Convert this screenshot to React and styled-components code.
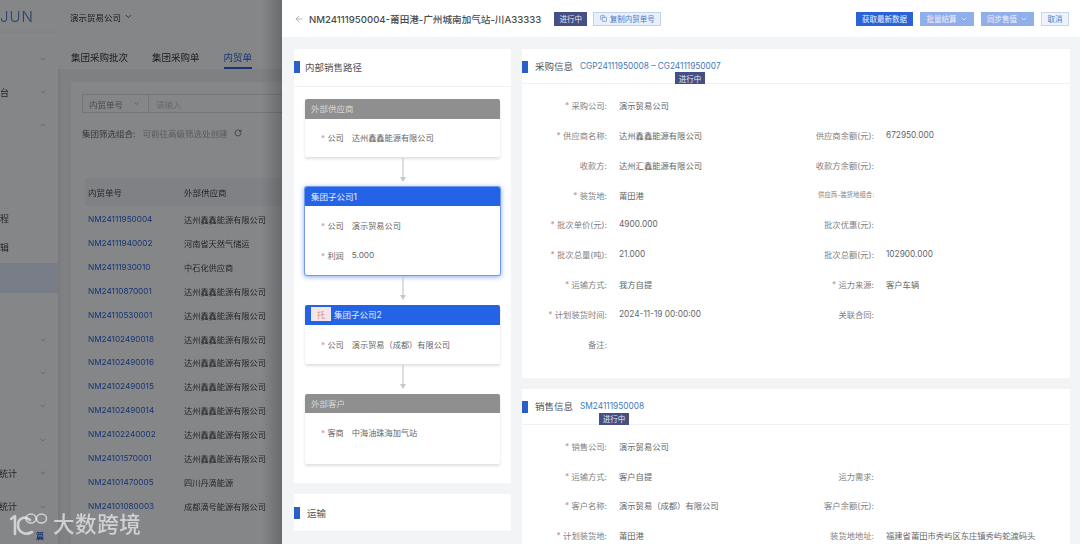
import React from "react";
import styled, { createGlobalStyle } from "styled-components";
import { ArrowLeft, ChevronDown, ChevronUp, Copy, RotateCw } from "lucide-react";

const GlobalStyle = createGlobalStyle`
  html, body { margin: 0; padding: 0; }
  body {
    width: 1080px;
    height: 544px;
    overflow: hidden;
    font-family: Inter, "Noto Sans CJK SC", sans-serif;
    color: #555;
  }
  * { box-sizing: border-box; }
`;

const Page = styled.div`
  position: relative;
  display: flex;
  width: 1080px;
  height: 544px;
  overflow: hidden;
  filter: blur(0.25px);
`;

/* page behind the drawer */
const Behind = styled.div`
  position: relative;
  flex: 0 0 282px;
  height: 544px;
  overflow: hidden;
  background: #f2f3f6;
  filter: blur(0.5px);
`;

const Dim = styled.div`
  position: absolute;
  inset: 0;
  background: linear-gradient(90deg, rgba(0, 0, 0, 0) 262px, rgba(0, 0, 0, 0.2) 282px), rgba(6, 8, 12, 0.49);
`;

const TopBar = styled.div`
  display: flex;
  align-items: center;
  height: 33px;
  background: #fff;
`;

const Brand = styled.div`
  width: 70px;
  font-size: 15px;
  font-weight: 300;
  letter-spacing: 1px;
  color: #4a79c8;
  line-height: 1;
`;

const Company = styled.div`
  display: flex;
  align-items: center;
  gap: 3px;
  font-size: 8.5px;
  color: #333;
`;

const Under = styled.div`
  display: flex;
  height: 511px;
`;

const Side = styled.aside`
  flex: 0 0 58px;
  padding-top: 9px;
  background: #fff;
  box-shadow: 1px 0 3px rgba(0, 0, 0, 0.08);
`;

const SideItem = styled.div`
  display: flex;
  align-items: center;
  justify-content: space-between;
  height: ${(p) => p.$h}px;
  padding-right: 11px;
  font-size: 9px;
  color: #444;
  background: ${(p) => (p.$active ? "#e6eeff" : "transparent")};
`;

const SideText = styled.span`
  display: flex;
  justify-content: flex-end;
  width: ${(p) => p.$w || 9}px;
  overflow: hidden;
  white-space: nowrap;
`;

const SideMark = styled.span`
  margin-left: 36px;
  font-size: 8px;
  font-weight: 700;
  color: #2a62d8;
`;

const Main = styled.div`
  flex: 1;
  min-width: 0;
`;

const Tabs = styled.div`
  display: flex;
  gap: 24px;
  height: 36px;
  padding: 17px 0 0 13px;
  background: #fff;
`;

const Tab = styled.div`
  height: 19px;
  font-size: 9.5px;
  line-height: 16px;
  white-space: nowrap;
  color: ${(p) => (p.$active ? "#2a5fd9" : "#333")};
  border-bottom: ${(p) => (p.$active ? "2px solid #2a5fd9" : "0")};
`;

const ListPanel = styled.div`
  margin: 13px 0 0 13px;
  height: 480px;
  padding: 12px 0 0 11px;
  background: #fff;
`;

const SearchBox = styled.div`
  display: flex;
  align-items: center;
  width: 220px;
  height: 19px;
  border: 1px solid #dcdfe6;
  font-size: 8.5px;
  color: #888;
`;

const SearchSelect = styled.div`
  display: flex;
  align-items: center;
  justify-content: space-between;
  width: 66px;
  height: 100%;
  padding: 0 8px 0 6px;
  border-right: 1px solid #dcdfe6;
`;

const Placeholder = styled.span`
  margin-left: 7px;
  color: #c4c7cc;
`;

const Combo = styled.div`
  display: flex;
  align-items: center;
  gap: 7px;
  margin-top: 13.5px;
  font-size: 8.5px;
  white-space: nowrap;
  color: #666;
`;

const ComboHint = styled.span`
  color: #aaa;
`;

const ListHead = styled.div`
  display: grid;
  grid-template-columns: 96px 1fr;
  align-items: center;
  width: 260px;
  height: 28px;
  margin: 39px 0 1.5px 3px;
  padding-left: 3px;
  font-size: 8.5px;
  color: #444;
  background: #f5f6f8;
`;

const ListRow = styled.div`
  display: grid;
  grid-template-columns: 96px 1fr;
  align-items: center;
  height: 23.93px;
  padding-left: 6px;
  font-size: 8.2px;
  white-space: nowrap;
`;

const ListId = styled.span`
  color: #2a5fd9;
`;

const ListName = styled.span`
  color: #444;
`;

/* drawer */
const Drawer = styled.div`
  flex: 1;
  min-width: 0;
  background: #f2f4f5;
`;

const DrawerHead = styled.header`
  display: flex;
  align-items: center;
  height: 37px;
  padding: 0 11px 0 12px;
  background: #fff;
`;

const Title = styled.h1`
  margin: 0 13px 0 5px;
  font-size: 9.6px;
  font-weight: 500;
  white-space: nowrap;
  color: #4a4a4a;
`;

const StatusTag = styled.span`
  display: inline-flex;
  align-items: center;
  justify-content: center;
  width: ${(p) => p.$w || 33}px;
  height: ${(p) => p.$h || 14}px;
  font-size: 7.5px;
  color: #e3e6f2;
  background: #454f83;
`;

const CopyButton = styled.button`
  display: inline-flex;
  align-items: center;
  justify-content: center;
  gap: 3px;
  width: 68px;
  height: 14px;
  margin-left: 6px;
  padding: 0;
  font: inherit;
  font-size: 7.5px;
  color: #4a78c4;
  background: #e9f0fb;
  border: 1px solid #bfd2ee;
`;

const HeadActions = styled.div`
  display: flex;
  gap: 7px;
  margin-left: auto;
`;

const ActionButton = styled.button`
  display: inline-flex;
  align-items: center;
  justify-content: center;
  gap: 3px;
  width: ${(p) => p.$w}px;
  height: 14px;
  padding: 0;
  font: inherit;
  font-size: 7.5px;
  color: ${(p) => (p.$plain ? "#4a78c4" : "#eef3ff")};
  background: ${(p) => (p.$plain ? "#eef3fb" : p.$soft ? "#90aeea" : "#2a62d8")};
  border: ${(p) => (p.$plain ? "1px solid #c7d6ee" : "0")};
`;

const DrawerBody = styled.div`
  display: grid;
  grid-template-columns: 217px 548px;
  gap: 11px;
  padding: 12px 0 0 12px;
`;

const Column = styled.div`
  display: flex;
  flex-direction: column;
  gap: 11px;
`;

const Card = styled.section`
  background: #fff;
`;

const CardHead = styled.div`
  position: relative;
  display: flex;
  align-items: center;
  height: ${(p) => p.$h || 35}px;
  padding-left: ${(p) => p.$pad || 13}px;
  padding-bottom: ${(p) => p.$lift || 0}px;
  border-bottom: 1px solid #f0f1f3;
  font-size: 9.5px;
  color: #555;
  &::before {
    content: "";
    position: absolute;
    left: 0;
    top: ${(p) => p.$markTop || 12}px;
    width: 6px;
    height: 12px;
    background: #2a5fc9;
  }
`;

const CardCode = styled.span`
  margin-left: 7px;
  font-size: 8.3px;
  color: #4678b8;
`;

const FloatingTag = styled.div`
  position: absolute;
  left: ${(p) => p.$left}px;
  top: ${(p) => p.$top || 23}px;
`;

const FlowWrap = styled.div`
  padding: 12px 11px 19px;
`;

const Node = styled.div`
  border-radius: 2px;
  background: #fff;
  box-shadow: ${(p) =>
    p.$focus
      ? "0 0 0 1px #6f9bec, 0 1px 5px 1px rgba(42, 98, 216, 0.55)"
      : "0 2px 3px rgba(0, 0, 0, 0.13)"};
`;

const NodeHead = styled.div`
  display: flex;
  align-items: center;
  gap: 3px;
  height: 19.5px;
  padding-left: 6px;
  padding-bottom: 1px;
  border-radius: 2px 2px 0 0;
  font-size: 8.5px;
  color: ${(p) => (p.$blue ? "#e8eeff" : "#d8d8d8")};
  background: ${(p) => (p.$blue ? "#2462e6" : "#8f8f8f")};
`;

const Badge = styled.span`
  display: inline-flex;
  align-items: center;
  justify-content: center;
  width: 20px;
  height: 14px;
  font-size: 8px;
  color: #d98a8a;
  background: #f3e6e6;
`;

const NodeBody = styled.div`
  padding: ${(p) => p.$top ?? 4}px 0 ${(p) => p.$bottom || 5}px;
`;

const NodeRow = styled.div`
  display: flex;
  align-items: center;
  height: 30px;
  padding-left: 16px;
  font-size: 8.2px;
  white-space: nowrap;
  color: #666;
`;

const NodeLabel = styled.span`
  margin-right: 8px;
  &::before {
    content: "* ";
    color: #b99;
  }
`;

const Connector = styled.div`
  display: flex;
  justify-content: center;
  height: ${(p) => p.$h || 30}px;
  padding-top: 1px;
`;

const FormGrid = styled.div`
  display: grid;
  grid-template-columns: 268px 1fr;
  padding: 6px 0 19px;
`;

const Field = styled.div`
  display: flex;
  align-items: center;
  height: 29.87px;
  font-size: 8.3px;
  white-space: nowrap;
`;

const FieldLabel = styled.span`
  flex: 0 0 ${(p) => p.$w || 85}px;
  font-size: ${(p) => (p.$small ? 6.4 : 8.3)}px;
  text-align: right;
  color: #808080;
  &::before {
    content: ${(p) => (p.$req ? '"* "' : '""')};
    color: #b99;
  }
`;

const FieldValue = styled.span`
  margin-left: 12px;
  color: #666;
`;

const Watermark = styled.div`
  position: absolute;
  left: 10px;
  top: 511px;
  display: flex;
  align-items: center;
  gap: 5px;
  font-size: 21.5px;
  font-weight: 500;
  line-height: 26px;
  letter-spacing: 0.6px;
  color: rgba(255, 255, 255, 0.62);
`;

const sideItems = [
  { h: 33.4, chev: "down" },
  { h: 33.4, chev: "down", text: "台" },
  { h: 33.4, chev: "up", text: "" },
  { h: 62.8 },
  { h: 28, text: "程" },
  { h: 30, text: "辑" },
  { h: 30, active: true },
  { h: 30 },
  { h: 33.4, chev: "down" },
  { h: 33.4, chev: "down" },
  { h: 33.4, chev: "down" },
  { h: 33.4, chev: "down" },
  { h: 33.4, chev: "down", text: "统计", w: 17 },
  { h: 33.4, chev: "down", text: "统计", w: 17 },
];

const supplier = "达州鑫鑫能源有限公司";
const orders = [
  ["NM24111950004", supplier],
  ["NM24111940002", "河南省天然气储运"],
  ["NM24111930010", "中石化供应商"],
  ["NM24110870001", supplier],
  ["NM24110530001", supplier],
  ["NM24102490018", supplier],
  ["NM24102490016", supplier],
  ["NM24102490015", supplier],
  ["NM24102490014", supplier],
  ["NM24102240002", supplier],
  ["NM24101570001", supplier],
  ["NM24101470005", "四川丹滴能源"],
  ["NM24101080003", "成都滴号能源有限公司"],
];

const purchaseFields = [
  [{ label: "采购公司:", value: "演示贸易公司", req: true }, {}],
  [
    { label: "供应商名称:", value: supplier, req: true },
    { label: "供应商余额(元):", value: "672950.000" },
  ],
  [{ label: "收款方:", value: "达州汇鑫能源有限公司" }, { label: "收款方余额(元):" }],
  [{ label: "装货地:", value: "莆田港", req: true }, { label: "供应商-装货地组合:", small: true }],
  [{ label: "批次单价(元):", value: "4900.000", req: true }, { label: "批次优惠(元):" }],
  [
    { label: "批次总量(吨):", value: "21.000", req: true },
    { label: "批次总额(元):", value: "102900.000" },
  ],
  [
    { label: "运输方式:", value: "我方自提", req: true },
    { label: "运力来源:", value: "客户车辆", req: true },
  ],
  [{ label: "计划装货时间:", value: "2024-11-19 00:00:00", req: true }, { label: "关联合同:" }],
  [{ label: "备注:" }, {}],
];

const saleFields = [
  [{ label: "销售公司:", value: "演示贸易公司", req: true }, {}],
  [{ label: "运输方式:", value: "客户自提", req: true }, { label: "运力需求:" }],
  [{ label: "客户名称:", value: "演示贸易（成都）有限公司", req: true }, { label: "客户余额(元):" }],
  [
    { label: "计划装货地:", value: "莆田港", req: true },
    { label: "装货地地址:", value: "福建省莆田市秀屿区东庄镇秀屿蛇渡码头" },
  ],
];

const FlowArrow = ({ height = 24 }) => (
  <svg width="8" height={height} viewBox={`0 0 8 ${height}`} fill="none">
    <path d={`M4 0V${height - 4}`} stroke="#c6c8cc" strokeWidth="1.2" />
    <path d={`M1 ${height - 5}L4 ${height}L7 ${height - 5}Z`} fill="#c6c8cc" />
  </svg>
);

const WatermarkLogo = () => (
  <svg width="38" height="24" viewBox="0 0 38 24" fill="none" stroke="rgba(255,255,255,0.62)">
    <path d="M1 7L5 4V22" strokeWidth="2.6" strokeLinecap="round" strokeLinejoin="round" />
    <path d="M20 8C14 3 8 7 8 13C8 20 15 24 22 20" strokeWidth="2.6" strokeLinecap="round" />
    <ellipse cx="21" cy="6.5" rx="5" ry="4.5" strokeWidth="1.5" />
    <ellipse cx="31.5" cy="6.5" rx="5" ry="4.5" strokeWidth="1.5" />
  </svg>
);

const FormFields = ({ rows }) => (
  <FormGrid>
    {rows.flat().map((field, i) => (
      <Field key={i}>
        {field.label && (
          <>
            <FieldLabel $w={i % 2 ? 84 : 85} $req={field.req} $small={field.small}>
              {field.label}
            </FieldLabel>
            <FieldValue>{field.value}</FieldValue>
          </>
        )}
      </Field>
    ))}
  </FormGrid>
);

const App = () => {
  return (
    <Page>
      <GlobalStyle />
      <Behind>
        <TopBar>
          <Brand>JUN</Brand>
          <Company>
            演示贸易公司 <ChevronDown size={9} />
          </Company>
        </TopBar>
        <Under>
          <Side>
            {sideItems.map((item, i) => (
              <SideItem key={i} $h={item.h} $active={item.active}>
                <SideText $w={item.w}>{item.text}</SideText>
                {item.chev === "down" && <ChevronDown size={8} color="#aaa" />}
                {item.chev === "up" && <ChevronUp size={8} color="#aaa" />}
              </SideItem>
            ))}
            <SideMark>篇</SideMark>
          </Side>
          <Main>
            <Tabs>
              <Tab>集团采购批次</Tab>
              <Tab>集团采购单</Tab>
              <Tab $active>内贸单</Tab>
            </Tabs>
            <ListPanel>
              <SearchBox>
                <SearchSelect>
                  内贸单号 <ChevronDown size={7} />
                </SearchSelect>
                <Placeholder>请输入</Placeholder>
              </SearchBox>
              <Combo>
                集团筛选组合:
                <ComboHint>可前往高级筛选处创建</ComboHint>
                <RotateCw size={8} color="#556" />
              </Combo>
              <ListHead>
                <span>内贸单号</span>
                <span>外部供应商</span>
              </ListHead>
              {orders.map(([id, name]) => (
                <ListRow key={id}>
                  <ListId>{id}</ListId>
                  <ListName>{name}</ListName>
                </ListRow>
              ))}
            </ListPanel>
          </Main>
        </Under>
        <Dim />
      </Behind>

      <Drawer>
        <DrawerHead>
          <ArrowLeft size={10} strokeWidth={1.4} color="#888" />
          <Title>NM24111950004-莆田港-广州城南加气站-川A33333</Title>
          <StatusTag>进行中</StatusTag>
          <CopyButton>
            <Copy size={7} />
            复制内贸单号
          </CopyButton>
          <HeadActions>
            <ActionButton $w={57}>获取最新数据</ActionButton>
            <ActionButton $w={54} $soft>
              批量结算 <ChevronDown size={8} />
            </ActionButton>
            <ActionButton $w={53} $soft>
              同步售值 <ChevronDown size={8} />
            </ActionButton>
            <ActionButton $w={28} $plain>
              取消
            </ActionButton>
          </HeadActions>
        </DrawerHead>

        <DrawerBody>
          <Column>
            <Card>
              <CardHead $h={38} $pad={11} $lift={2}>
                内部销售路径
              </CardHead>
              <FlowWrap>
                <Node>
                  <NodeHead>外部供应商</NodeHead>
                  <NodeBody $top={3}>
                    <NodeRow>
                      <NodeLabel>公司</NodeLabel>
                      达州鑫鑫能源有限公司
                    </NodeRow>
                  </NodeBody>
                </Node>
                <Connector>
                  <FlowArrow />
                </Connector>
                <Node $focus>
                  <NodeHead $blue>集团子公司1</NodeHead>
                  <NodeBody>
                    <NodeRow>
                      <NodeLabel>公司</NodeLabel>
                      演示贸易公司
                    </NodeRow>
                    <NodeRow>
                      <NodeLabel>利润</NodeLabel>
                      5.000
                    </NodeRow>
                  </NodeBody>
                </Node>
                <Connector>
                  <FlowArrow />
                </Connector>
                <Node>
                  <NodeHead $blue>
                    <Badge>托</Badge>
                    集团子公司2
                  </NodeHead>
                  <NodeBody>
                    <NodeRow>
                      <NodeLabel>公司</NodeLabel>
                      演示贸易（成都）有限公司
                    </NodeRow>
                  </NodeBody>
                </Node>
                <Connector>
                  <FlowArrow />
                </Connector>
                <Node>
                  <NodeHead>外部客户</NodeHead>
                  <NodeBody $bottom={17}>
                    <NodeRow>
                      <NodeLabel>客商</NodeLabel>
                      中海油珠海加气站
                    </NodeRow>
                  </NodeBody>
                </Node>
              </FlowWrap>
            </Card>
            <Card>
              <CardHead $h={38} $pad={13} $markTop={13}>
                运输
              </CardHead>
            </Card>
          </Column>

          <Column>
            <Card>
              <CardHead>
                采购信息
                <CardCode>CGP24111950008 – CG24111950007</CardCode>
                <FloatingTag $left={153}>
                  <StatusTag $w={30} $h={12}>
                    进行中
                  </StatusTag>
                </FloatingTag>
              </CardHead>
              <FormFields rows={purchaseFields} />
            </Card>
            <Card>
              <CardHead $h={36} $lift={0}>
                销售信息
                <CardCode>SM24111950008</CardCode>
                <FloatingTag $left={77} $top={24}>
                  <StatusTag $w={30} $h={12}>
                    进行中
                  </StatusTag>
                </FloatingTag>
              </CardHead>
              <FormFields rows={saleFields} />
            </Card>
          </Column>
        </DrawerBody>
      </Drawer>

      <Watermark>
        <WatermarkLogo />
        大数跨境
      </Watermark>
    </Page>
  );
};

export default App;
